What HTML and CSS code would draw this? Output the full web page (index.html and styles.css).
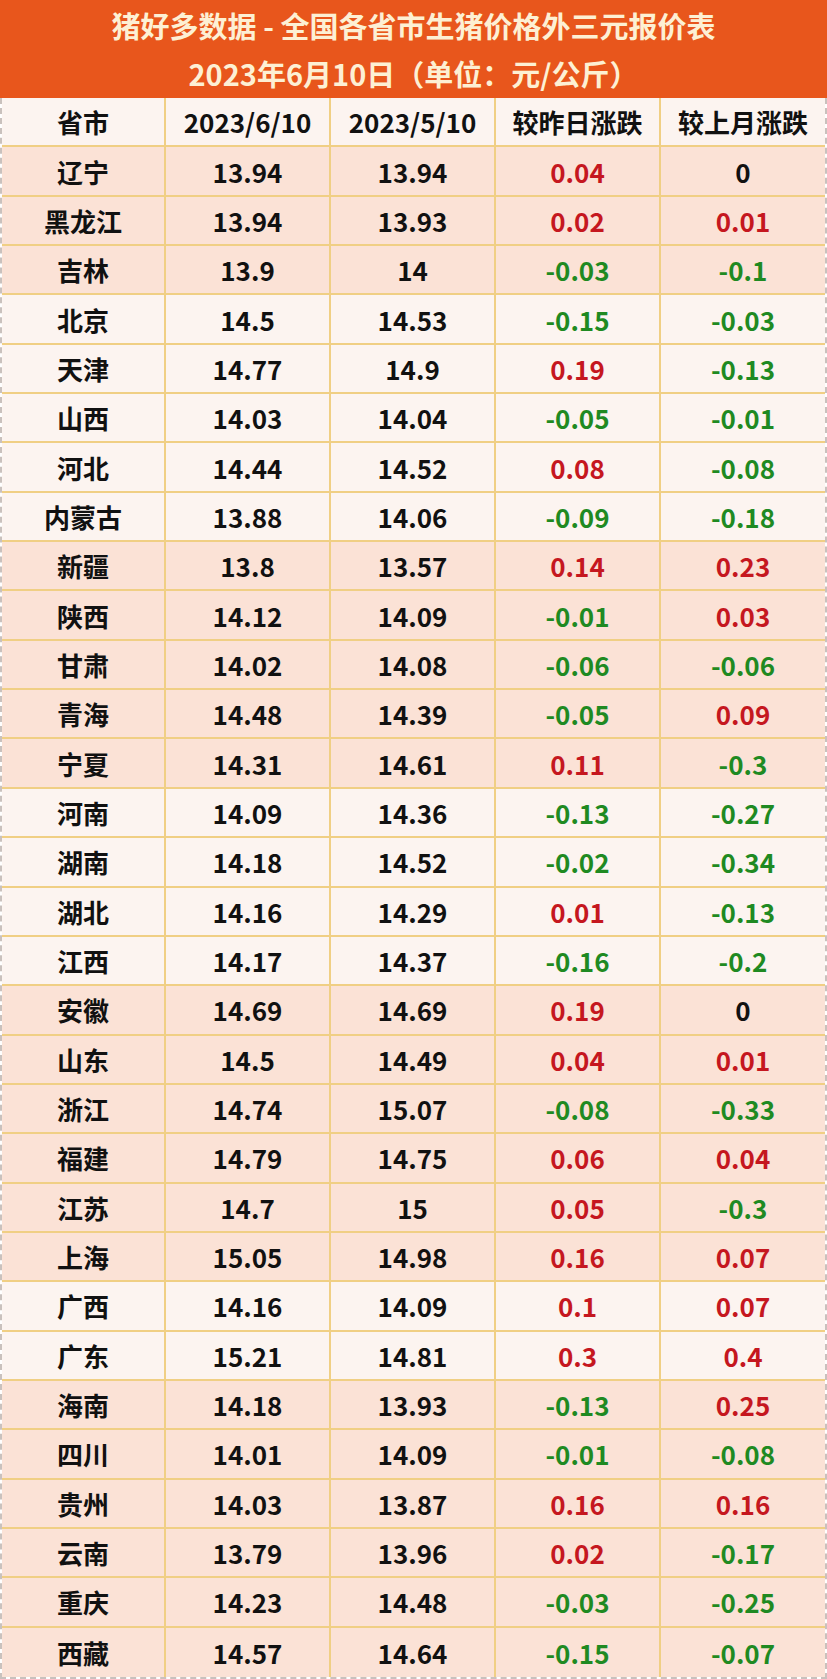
FILE: index.html
```html
<!DOCTYPE html>
<html lang="zh-CN">
<head>
<meta charset="utf-8">
<title>猪好多数据 - 全国各省市生猪价格外三元报价表</title>
<link rel="stylesheet" href="styles.css">
</head>
<body>
<div class="sheet">
  <header class="title">
    <div class="title-line">猪好多数据 - 全国各省市生猪价格外三元报价表</div>
    <div class="title-line">2023年6月10日（单位：元/公斤）</div>
  </header>
  <div class="table">
    <div class="row lt head"><div class="c">省市</div><div class="c">2023/6/10</div><div class="c">2023/5/10</div><div class="c">较昨日涨跌</div><div class="c">较上月涨跌</div></div>
    <div class="row"><div class="c">辽宁</div><div class="c">13.94</div><div class="c">13.94</div><div class="c up">0.04</div><div class="c">0</div></div>
    <div class="row"><div class="c">黑龙江</div><div class="c">13.94</div><div class="c">13.93</div><div class="c up">0.02</div><div class="c up">0.01</div></div>
    <div class="row"><div class="c">吉林</div><div class="c">13.9</div><div class="c">14</div><div class="c dn">-0.03</div><div class="c dn">-0.1</div></div>
    <div class="row lt"><div class="c">北京</div><div class="c">14.5</div><div class="c">14.53</div><div class="c dn">-0.15</div><div class="c dn">-0.03</div></div>
    <div class="row lt"><div class="c">天津</div><div class="c">14.77</div><div class="c">14.9</div><div class="c up">0.19</div><div class="c dn">-0.13</div></div>
    <div class="row lt"><div class="c">山西</div><div class="c">14.03</div><div class="c">14.04</div><div class="c dn">-0.05</div><div class="c dn">-0.01</div></div>
    <div class="row lt"><div class="c">河北</div><div class="c">14.44</div><div class="c">14.52</div><div class="c up">0.08</div><div class="c dn">-0.08</div></div>
    <div class="row lt"><div class="c">内蒙古</div><div class="c">13.88</div><div class="c">14.06</div><div class="c dn">-0.09</div><div class="c dn">-0.18</div></div>
    <div class="row"><div class="c">新疆</div><div class="c">13.8</div><div class="c">13.57</div><div class="c up">0.14</div><div class="c up">0.23</div></div>
    <div class="row"><div class="c">陕西</div><div class="c">14.12</div><div class="c">14.09</div><div class="c dn">-0.01</div><div class="c up">0.03</div></div>
    <div class="row"><div class="c">甘肃</div><div class="c">14.02</div><div class="c">14.08</div><div class="c dn">-0.06</div><div class="c dn">-0.06</div></div>
    <div class="row"><div class="c">青海</div><div class="c">14.48</div><div class="c">14.39</div><div class="c dn">-0.05</div><div class="c up">0.09</div></div>
    <div class="row"><div class="c">宁夏</div><div class="c">14.31</div><div class="c">14.61</div><div class="c up">0.11</div><div class="c dn">-0.3</div></div>
    <div class="row lt"><div class="c">河南</div><div class="c">14.09</div><div class="c">14.36</div><div class="c dn">-0.13</div><div class="c dn">-0.27</div></div>
    <div class="row lt"><div class="c">湖南</div><div class="c">14.18</div><div class="c">14.52</div><div class="c dn">-0.02</div><div class="c dn">-0.34</div></div>
    <div class="row lt"><div class="c">湖北</div><div class="c">14.16</div><div class="c">14.29</div><div class="c up">0.01</div><div class="c dn">-0.13</div></div>
    <div class="row lt"><div class="c">江西</div><div class="c">14.17</div><div class="c">14.37</div><div class="c dn">-0.16</div><div class="c dn">-0.2</div></div>
    <div class="row"><div class="c">安徽</div><div class="c">14.69</div><div class="c">14.69</div><div class="c up">0.19</div><div class="c">0</div></div>
    <div class="row"><div class="c">山东</div><div class="c">14.5</div><div class="c">14.49</div><div class="c up">0.04</div><div class="c up">0.01</div></div>
    <div class="row"><div class="c">浙江</div><div class="c">14.74</div><div class="c">15.07</div><div class="c dn">-0.08</div><div class="c dn">-0.33</div></div>
    <div class="row"><div class="c">福建</div><div class="c">14.79</div><div class="c">14.75</div><div class="c up">0.06</div><div class="c up">0.04</div></div>
    <div class="row"><div class="c">江苏</div><div class="c">14.7</div><div class="c">15</div><div class="c up">0.05</div><div class="c dn">-0.3</div></div>
    <div class="row"><div class="c">上海</div><div class="c">15.05</div><div class="c">14.98</div><div class="c up">0.16</div><div class="c up">0.07</div></div>
    <div class="row lt"><div class="c">广西</div><div class="c">14.16</div><div class="c">14.09</div><div class="c up">0.1</div><div class="c up">0.07</div></div>
    <div class="row lt"><div class="c">广东</div><div class="c">15.21</div><div class="c">14.81</div><div class="c up">0.3</div><div class="c up">0.4</div></div>
    <div class="row"><div class="c">海南</div><div class="c">14.18</div><div class="c">13.93</div><div class="c dn">-0.13</div><div class="c up">0.25</div></div>
    <div class="row"><div class="c">四川</div><div class="c">14.01</div><div class="c">14.09</div><div class="c dn">-0.01</div><div class="c dn">-0.08</div></div>
    <div class="row"><div class="c">贵州</div><div class="c">14.03</div><div class="c">13.87</div><div class="c up">0.16</div><div class="c up">0.16</div></div>
    <div class="row"><div class="c">云南</div><div class="c">13.79</div><div class="c">13.96</div><div class="c up">0.02</div><div class="c dn">-0.17</div></div>
    <div class="row"><div class="c">重庆</div><div class="c">14.23</div><div class="c">14.48</div><div class="c dn">-0.03</div><div class="c dn">-0.25</div></div>
    <div class="row last"><div class="c">西藏</div><div class="c">14.57</div><div class="c">14.64</div><div class="c dn">-0.15</div><div class="c dn">-0.07</div></div>
  </div>
</div>
</body>
</html>
```
FILE: styles.css
```css
* { box-sizing: border-box; }
html, body { margin: 0; padding: 0; background: #ffffff; }
body {
  font-family: "Noto Sans CJK SC", "Noto Sans", sans-serif;
  font-weight: 700;
  color: #111111;
}
.sheet { width: 827px; }
.title {
  height: 98px;
  background: #e8561c;
  color: #fdf0d4;
  padding-top: 1px;
  text-align: center;
  font-size: 29px;
}
.title-line { line-height: 48px; height: 48px; }
.table {
  display: flex;
  flex-direction: column;
  border-left: 2px dashed #c9c1bd;
  border-right: 2px dashed #c9c1bd;
  border-bottom: 2px dashed #c9c1bd;
}
.row {
  display: grid;
  grid-template-columns: 164px 165px 165px 165px 164px;
  height: 49.35px;
  background: #fbe2d6;
  border-bottom: 2px solid #f0cf84;
}
.row.lt { background: #fcf4f0; }
.row.last { border-bottom: none; }
.c {
  display: flex;
  align-items: center;
  justify-content: center;
  font-size: 26px;
  border-right: 2px solid #f0cf84;
}
.c:last-child { border-right: none; }
.up { color: #c5171f; }
.dn { color: #1f8a22; }
```
